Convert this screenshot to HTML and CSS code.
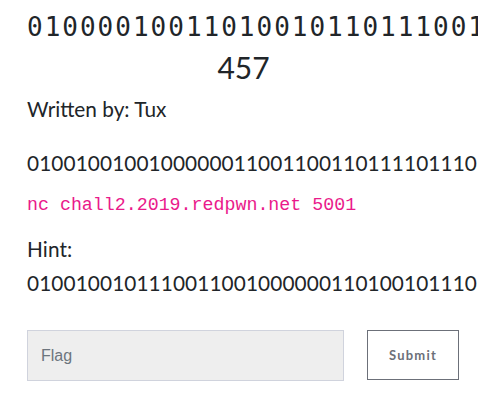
FILE: index.html
```html
<!DOCTYPE html>
<html lang="en">
<head>
<meta charset="utf-8">
<title>Binary</title>
<link rel="stylesheet" href="styles.css">
</head>
<body>
<div class="modal">
  <h3 class="title">01000010011010010110111001</h3>
  <h4 class="value">457</h4>
  <div class="desc">
    <p class="author">Written by: Tux</p>
    <p class="bin">0100100100100000011001100110111101110</p>
    <p class="cmd"><code>nc chall2.2019.redpwn.net 5001</code></p>
    <p class="hint">Hint:<br>0100100101110011001000000110100101110</p>
  </div>
  <form class="flag-form">
    <input class="flag-input" type="text" placeholder="Flag">
    <button class="submit" type="button">Submit</button>
  </form>
</div>
</body>
</html>
```
FILE: styles.css
```css
html, body {
  margin: 0;
  padding: 0;
  overflow: hidden;
  background: #ffffff;
}
body {
  font-family: Lato, "Noto Sans", sans-serif;
  color: #212529;
}
.modal {
  width: 433px;
  padding: 12px 0 0 27px;
}
.title {
  margin: 0;
  font-family: "DejaVu Sans Mono", monospace;
  font-weight: normal;
  font-size: 26px;
  line-height: 31.2px;
  letter-spacing: 2px;
  text-align: left;
  white-space: nowrap;
}
.value {
  margin: 6px 0 0;
  font-weight: normal;
  font-size: 30px;
  line-height: 36px;
  text-align: center;
}
.desc p {
  margin: 0;
  font-size: 20.8px;
  line-height: 34px;
  white-space: nowrap;
}
.desc .author {
  margin-top: 7px;
}
.desc .bin {
  margin-top: 20px;
  letter-spacing: 0.1px;
}
.desc .cmd {
  margin-top: 5px;
}
.desc .hint {
  margin-top: 13px;
}
.desc .hint {
  letter-spacing: 0.1px;
}
.cmd code {
  font-family: "Liberation Mono", monospace;
  font-size: 18.3px;
  line-height: 1;
  color: #ea1a8b;
}
.flag-form {
  display: flex;
  gap: 23px;
  margin-top: 30px;
  align-items: flex-start;
}
.flag-input {
  box-sizing: border-box;
  width: 317px;
  height: 51px;
  margin: 0;
  padding: 0 13px;
  border: 1px solid #d0d3dd;
  border-radius: 0;
  background: #eeeeee;
  font-family: "Liberation Sans", Arial, sans-serif;
  font-size: 16px;
  color: #495057;
  outline: none;
}
.flag-input::placeholder {
  color: #6c757d;
}
.submit {
  box-sizing: border-box;
  width: 92px;
  height: 50px;
  margin: 0;
  padding: 0;
  border: 1px solid #6c7079;
  border-radius: 0;
  background: #ffffff;
  font-family: Lato, sans-serif;
  font-weight: bold;
  font-size: 13px;
  letter-spacing: 1.2px;
  color: #6c7079;
}
```
